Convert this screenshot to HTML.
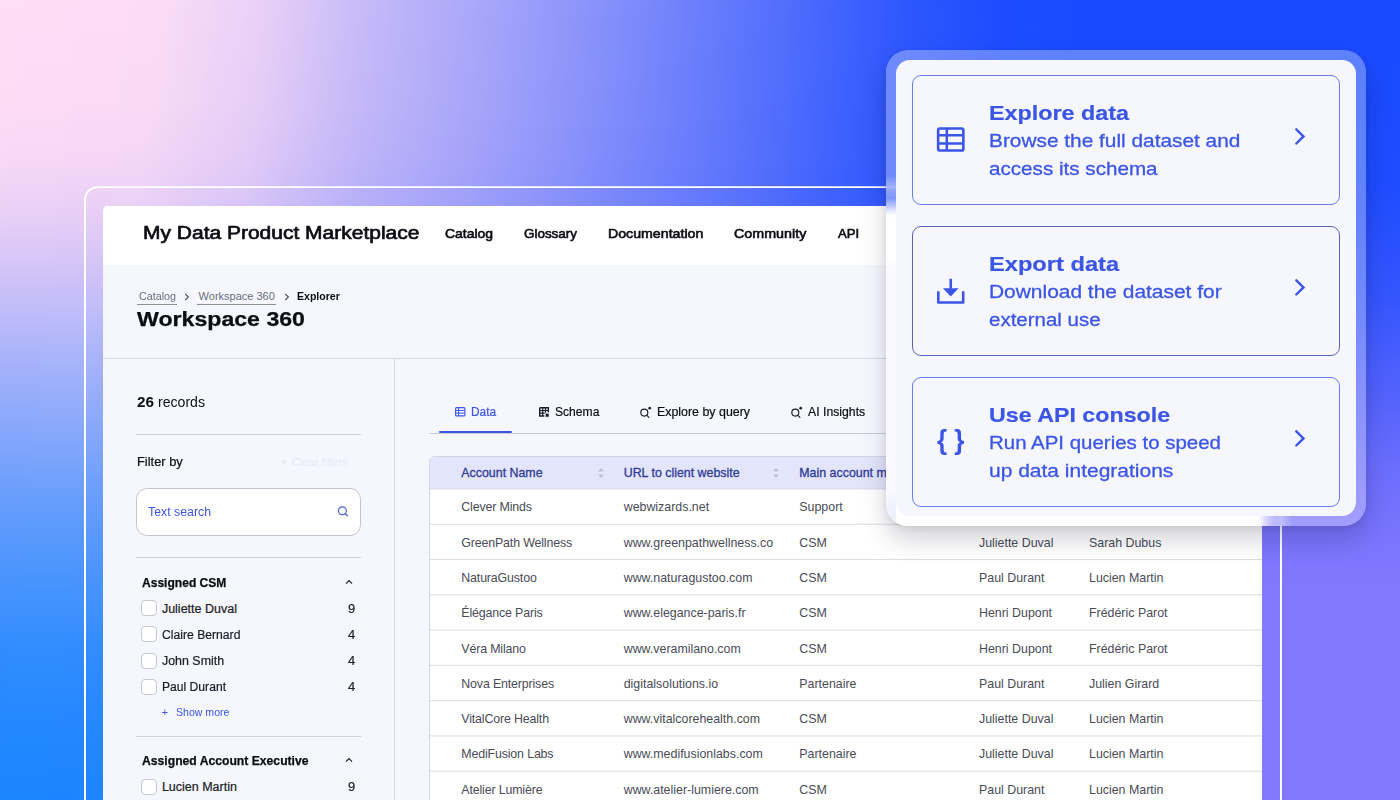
<!DOCTYPE html>
<html lang="en">
<head>
<meta charset="utf-8">
<title>My Data Product Marketplace</title>
<style>
*{box-sizing:border-box;margin:0;padding:0}
html,body{width:1400px;height:800px;overflow:hidden}
body{position:relative;font-family:"Liberation Sans",sans-serif;color:#0c0c14;background:#1d4bff}
.t{position:absolute;white-space:pre;line-height:1;display:block;transform-origin:0 50%}
.a{position:absolute}
/* ---------- background ---------- */
.bg-base{position:absolute;inset:0;background:linear-gradient(to bottom,#194aff 0%,#1e4cff 23%,#3355fe 36.5%,#5162fd 48.5%,#6b6dfd 58.5%,#7b75fd 67.5%,#8179fd 74.5%,#8179fd 100%)}
.bg-left{position:absolute;inset:0;
  background:linear-gradient(to bottom,#fedef6 0%,#fcdcf5 13%,#f7d8f6 20%,#eed3f6 25%,#d2c4f8 34.4%,#adb5fa 43.75%,#8aa9fb 53.1%,#679efc 62.5%,#4a95fd 71.9%,#308dfe 81.25%,#2288ff 90.6%,#1a85ff 100%);
  -webkit-mask-image:linear-gradient(96deg,#000 0%,rgba(0,0,0,.99) 10.7%,rgba(0,0,0,.9) 17.9%,rgba(0,0,0,.75) 25%,rgba(0,0,0,.63) 32.1%,rgba(0,0,0,.5) 39.3%,rgba(0,0,0,.37) 46.4%,rgba(0,0,0,.23) 53.6%,rgba(0,0,0,.095) 60.7%,rgba(0,0,0,.015) 67.9%,transparent 75%);
  mask-image:linear-gradient(96deg,#000 0%,rgba(0,0,0,.99) 10.7%,rgba(0,0,0,.9) 17.9%,rgba(0,0,0,.75) 25%,rgba(0,0,0,.63) 32.1%,rgba(0,0,0,.5) 39.3%,rgba(0,0,0,.37) 46.4%,rgba(0,0,0,.23) 53.6%,rgba(0,0,0,.095) 60.7%,rgba(0,0,0,.015) 67.9%,transparent 75%)}
/* ---------- frame ---------- */
.frame{position:absolute;left:83.5px;top:186.2px;width:1198.5px;height:700px;border:2px solid #fff;border-radius:14px;clip-path:polygon(0 0,802.5px 0,802.5px 339.8px,1300px 339.8px,1300px 800px,0 800px)}
/* ---------- app window ---------- */
.app{position:absolute;left:0;top:0;width:1400px;height:800px;clip-path:inset(206px 138px 0 103px round 5px 0 0 0);background:#f6f7fe}
.hdr{left:103px;top:206px;width:1159px;height:59.3px;background:#fff}
.hl{position:absolute;height:1px;background:#d6d8e2}
.vl{position:absolute;width:1px;background:#d6d8e2}
.ul{position:absolute;height:1px;background:#8b8e9b}
.search{left:136px;top:488px;width:225px;height:47.5px;border:1px solid #c3c5d0;border-radius:11px;background:#fff}
.cb{position:absolute;left:141.2px;width:16px;height:16px;border:1px solid #c6c8d3;border-radius:4px;background:#fff}
/* table */
.tbl{left:428.5px;top:456px;width:900px;height:400px;border:1px solid #d3d5e0;border-radius:6px 0 0 0;background:#fff;overflow:hidden}
.th{position:absolute;left:0;top:0;width:100%;height:31.6px;background:#e2e5fb}
.rl{position:absolute;left:0;width:100%;height:1px;background:#dcdde5}
.tabline{left:428.5px;top:432.6px;width:900px;height:1px;background:#c9cbd6}
.tabact{left:439.3px;top:431.3px;width:72.5px;height:2.2px;background:#3b55e6;border-radius:1px}
/* ---------- floating card ---------- */
.glass{left:886px;top:50px;width:479.5px;height:476px;border-radius:22px;background:rgba(255,255,255,.3);overflow:hidden;box-shadow:0 13px 26px rgba(12,12,35,.19),0 2px 6px rgba(12,12,35,.07)}
.p0{left:0;top:125px;width:10px;height:24px;background:linear-gradient(to bottom,rgba(255,255,255,0),rgba(255,255,255,.16) 25%,rgba(255,255,255,.36) 50%,rgba(255,255,255,.16) 75%,rgba(255,255,255,0))}
.p1{left:0;top:142px;width:10px;height:334px;background:linear-gradient(to bottom,#708cfe 0,#7c95fe 6px,#bac7fe 14px,#f4f6ff 21px,#fff 25px,#fff 64px,#f9f9ff 80px,#f9f9ff 300px,#eff1fd 316px,#eef0fd 336px,#fcfcff 352px,#fff 360px,#fff 100%)}
.p2{left:10px;top:466px;width:382px;height:10px;background:linear-gradient(to right,#fff 0,#fff 362px,#d4d1fe 371px,#a39efe 382px)}
.p3{left:383px;top:466px;width:24px;height:10px;background:linear-gradient(to right,rgba(255,255,255,0),rgba(255,255,255,.16) 25%,rgba(255,255,255,.36) 50%,rgba(255,255,255,.16) 75%,rgba(255,255,255,0))}
.panel{left:896px;top:60px;width:459.5px;height:456px;border-radius:14px;background:#f6f7fe}
.card{position:absolute;left:912px;width:428px;height:130px;border:1.5px solid #6a7eea;border-radius:9px;background:#f5f6fe}
svg{position:absolute;overflow:visible}
</style>
</head>
<body>
<div class="bg-base"></div>
<div class="bg-left"></div>
<div class="frame"></div>

<div class="app">
  <div class="a hdr"></div>
  <div class="hl" style="left:103px;top:358px;width:1159px"></div>
  <div class="vl" style="left:394px;top:358px;height:442px"></div>
  <!-- breadcrumb underlines + chevrons -->
  <div class="ul" style="left:137.2px;top:303.6px;width:39.6px"></div>
  <div class="ul" style="left:197px;top:303.6px;width:78.5px"></div>
  <svg style="left:184px;top:292.5px" width="6" height="8" viewBox="0 0 6 8"><path d="M1.2 1l3.2 3-3.2 3" fill="none" stroke="#4f5260" stroke-width="1.1"/></svg>
  <svg style="left:283.5px;top:292.5px" width="6" height="8" viewBox="0 0 6 8"><path d="M1.2 1l3.2 3-3.2 3" fill="none" stroke="#4f5260" stroke-width="1.1"/></svg>
  <!-- sidebar -->
  <div class="hl" style="left:136px;top:434px;width:225px;background:#cfd1db"></div>
  <div class="a search"></div>
  <svg style="left:336px;top:505px" width="13" height="13" viewBox="0 0 13 13"><circle cx="6.4" cy="5.75" r="3.9" fill="none" stroke="#4a5fdc" stroke-width="1.15"/><path d="M9.3 8.7l2.2 2.1" stroke="#4a5fdc" stroke-width="1.2" stroke-linecap="round"/></svg>
  <div class="hl" style="left:136px;top:556.5px;width:225px;background:#cfd1db"></div>
  <svg style="left:345px;top:578.5px" width="8" height="6" viewBox="0 0 8 6"><path d="M1 4.6l3-3 3 3" fill="none" stroke="#1c1d26" stroke-width="1.2"/></svg>
  <div class="cb" style="top:600.1px"></div>
  <div class="cb" style="top:626.4px"></div>
  <div class="cb" style="top:652.7px"></div>
  <div class="cb" style="top:678.9px"></div>
  <div class="hl" style="left:136px;top:736.2px;width:225px;background:#cfd1db"></div>
  <svg style="left:345px;top:757px" width="8" height="6" viewBox="0 0 8 6"><path d="M1 4.6l3-3 3 3" fill="none" stroke="#1c1d26" stroke-width="1.2"/></svg>
  <div class="cb" style="top:778.6px"></div>
  <!-- tabs -->
  <div class="a tabline"></div>
  <div class="a tabact"></div>
<svg style="left:454.6px;top:406.8px" width="11" height="10" viewBox="0 0 11 10"><rect x=".6" y=".6" width="9.3" height="8.3" rx="1" fill="none" stroke="#3b55e6" stroke-width="1.1"/><path d="M.6 3.4h9.3M.6 6.1h9.3M3.6 .6v8.3" stroke="#3b55e6" stroke-width="1" fill="none"/></svg>
<svg style="left:538.7px;top:406.8px" width="11" height="10" viewBox="0 0 11 10"><path d="M.7 .7h8.6v4.6M.7 .7v8.3h4.6" fill="none" stroke="#1c1d26" stroke-width="1.4"/><path d="M.7 3.5h8.6M.7 6.2h5M3.7 .7v8.3M6.5 .7v5" stroke="#1c1d26" stroke-width="1.2" fill="none"/><rect x="6.6" y="6.6" width="3.2" height="3.2" fill="#1c1d26"/></svg>
<svg style="left:639.9px;top:406.2px" width="13" height="12" viewBox="0 0 13 12"><circle cx="4.3" cy="6.6" r="3.5" fill="none" stroke="#1c1d26" stroke-width="1.15"/><path d="M6.9 9.3l2 2.1" stroke="#1c1d26" stroke-width="1.15" stroke-linecap="round"/><circle cx="9.7" cy="2.2" r="1.35" fill="#1c1d26"/></svg>
<svg style="left:790.9px;top:406.2px" width="13" height="12" viewBox="0 0 13 12"><circle cx="4.3" cy="6.6" r="3.5" fill="none" stroke="#1c1d26" stroke-width="1.15"/><path d="M6.9 9.3l2 2.1" stroke="#1c1d26" stroke-width="1.15" stroke-linecap="round"/><circle cx="9.7" cy="2.2" r="1.35" fill="#1c1d26"/></svg>
<span class="t" style="left:143.0px;top:223.90px;font-size:18px;color:#0c0c14;transform:scaleX(1.1658);-webkit-text-stroke:.65px currentColor;">My Data Product Marketplace</span>
<span class="t" style="left:444.7px;top:227.30px;font-size:13px;color:#0c0c14;transform:scaleX(1.0711);-webkit-text-stroke:.6px currentColor;">Catalog</span>
<span class="t" style="left:524.0px;top:227.30px;font-size:13px;color:#0c0c14;transform:scaleX(1.0332);-webkit-text-stroke:.6px currentColor;">Glossary</span>
<span class="t" style="left:608.2px;top:227.30px;font-size:13px;color:#0c0c14;transform:scaleX(1.0897);-webkit-text-stroke:.6px currentColor;">Documentation</span>
<span class="t" style="left:734.4px;top:227.30px;font-size:13px;color:#0c0c14;transform:scaleX(1.0996);-webkit-text-stroke:.6px currentColor;">Community</span>
<span class="t" style="left:837.6px;top:227.30px;font-size:13px;color:#0c0c14;transform:scaleX(1.0110);-webkit-text-stroke:.6px currentColor;">API</span>
<span class="t" style="left:138.6px;top:291.00px;font-size:11px;color:#6a6d7c;transform:scaleX(0.9783);">Catalog</span>
<span class="t" style="left:198.6px;top:291.00px;font-size:11px;color:#6a6d7c;">Workspace 360</span>
<span class="t" style="left:296.6px;top:291.00px;font-size:11px;color:#0c0c14;font-weight:700;transform:scaleX(0.9588);">Explorer</span>
<span class="t" style="left:137.1px;top:310.20px;font-size:19.5px;color:#0c0c14;font-weight:700;transform:scaleX(1.1860);-webkit-text-stroke:.25px currentColor;">Workspace 360</span>
<span class="t" style="left:136.8px;top:395.00px;font-size:14px;color:#0c0c14;font-weight:700;transform:scaleX(1.0913);">26</span>
<span class="t" style="left:158.0px;top:395.00px;font-size:14px;color:#0c0c14;transform:scaleX(1.0067);">records</span>
<span class="t" style="left:136.8px;top:455.50px;font-size:12px;color:#0c0c14;transform:scaleX(1.0717);-webkit-text-stroke:.2px currentColor;">Filter by</span>
<span class="t" style="left:292.0px;top:456.50px;font-size:11px;color:#e5e6f1;transform:scaleX(1.0067);">Clear filters</span>
<span class="t" style="left:280.5px;top:456.50px;font-size:11px;color:#e5e6f1;">×</span>
<span class="t" style="left:148.2px;top:505.75px;font-size:12px;color:#3b55e6;transform:scaleX(1.0267);">Text search</span>
<span class="t" style="left:142.2px;top:576.90px;font-size:12px;color:#0c0c14;font-weight:700;transform:scaleX(1.0046);-webkit-text-stroke:.25px currentColor;">Assigned CSM</span>
<span class="t" style="left:161.9px;top:602.60px;font-size:12.5px;color:#1c1d26;-webkit-text-stroke:.22px currentColor;">Juliette Duval</span>
<span class="t" style="left:347.5px;top:602.60px;font-size:12.5px;color:#1c1d26;transform:scaleX(1.0355);-webkit-text-stroke:.22px currentColor;">9</span>
<span class="t" style="left:161.9px;top:629.00px;font-size:12.5px;color:#1c1d26;transform:scaleX(0.9728);-webkit-text-stroke:.22px currentColor;">Claire Bernard</span>
<span class="t" style="left:347.5px;top:629.00px;font-size:12.5px;color:#1c1d26;transform:scaleX(1.0355);-webkit-text-stroke:.22px currentColor;">4</span>
<span class="t" style="left:161.9px;top:655.30px;font-size:12.5px;color:#1c1d26;transform:scaleX(0.9931);-webkit-text-stroke:.22px currentColor;">John Smith</span>
<span class="t" style="left:347.5px;top:655.30px;font-size:12.5px;color:#1c1d26;transform:scaleX(1.0355);-webkit-text-stroke:.22px currentColor;">4</span>
<span class="t" style="left:161.9px;top:681.40px;font-size:12.5px;color:#1c1d26;transform:scaleX(0.9695);-webkit-text-stroke:.22px currentColor;">Paul Durant</span>
<span class="t" style="left:347.5px;top:681.40px;font-size:12.5px;color:#1c1d26;transform:scaleX(1.0355);-webkit-text-stroke:.22px currentColor;">4</span>
<span class="t" style="left:161.5px;top:707.30px;font-size:11px;color:#3b55e6;">+</span>
<span class="t" style="left:175.6px;top:707.30px;font-size:11px;color:#3b55e6;transform:scaleX(0.9597);">Show more</span>
<span class="t" style="left:142.2px;top:755.00px;font-size:12px;color:#0c0c14;font-weight:700;transform:scaleX(1.0138);-webkit-text-stroke:.25px currentColor;">Assigned Account Executive</span>
<span class="t" style="left:161.9px;top:781.10px;font-size:12.5px;color:#1c1d26;-webkit-text-stroke:.22px currentColor;">Lucien Martin</span>
<span class="t" style="left:347.5px;top:781.10px;font-size:12.5px;color:#1c1d26;transform:scaleX(1.0355);-webkit-text-stroke:.22px currentColor;">9</span>
<span class="t" style="left:471.4px;top:406.30px;font-size:12.5px;color:#3b55e6;transform:scaleX(0.9467);-webkit-text-stroke:.2px currentColor;">Data</span>
<span class="t" style="left:554.6px;top:406.30px;font-size:12.5px;color:#0c0c14;transform:scaleX(0.9682);-webkit-text-stroke:.2px currentColor;">Schema</span>
<span class="t" style="left:657.0px;top:406.30px;font-size:12.5px;color:#0c0c14;transform:scaleX(0.9913);-webkit-text-stroke:.2px currentColor;">Explore by query</span>
<span class="t" style="left:808.2px;top:406.30px;font-size:12.5px;color:#0c0c14;transform:scaleX(0.9799);-webkit-text-stroke:.2px currentColor;">AI Insights</span>
  <!-- table -->
  <div class="a tbl">
    <div class="th"></div>
<svg style="left:0;top:0" width="900" height="400" viewBox="0 0 900 400"><path d="M0 32.00h900M0 67.28h900M0 102.56h900M0 137.84h900M0 173.12h900M0 208.40h900M0 243.68h900M0 278.96h900M0 314.24h900M0 349.52h900M0 384.80h900" stroke="#dadbe4" stroke-width="1" fill="none"/></svg>
  </div>
<svg style="left:597.2px;top:465.5px" width="8" height="14" viewBox="0 0 8 14"><path d="M1.2 5.2L4 2.2l2.8 3z" fill="#b9bbc9"/><path d="M1.2 8.8L4 11.8l2.8-3z" fill="#b9bbc9"/></svg>
<svg style="left:772.2px;top:465.5px" width="8" height="14" viewBox="0 0 8 14"><path d="M1.2 5.2L4 2.2l2.8 3z" fill="#b9bbc9"/><path d="M1.2 8.8L4 11.8l2.8-3z" fill="#b9bbc9"/></svg>
<span class="t" style="left:461.3px;top:466.70px;font-size:12.4px;color:#303a97;-webkit-text-stroke:.3px currentColor;">Account Name</span>
<span class="t" style="left:623.7px;top:466.70px;font-size:12.4px;color:#303a97;-webkit-text-stroke:.3px currentColor;">URL to client website</span>
<span class="t" style="left:799.3px;top:466.70px;font-size:12.4px;color:#303a97;-webkit-text-stroke:.3px currentColor;">Main account manager</span>
<span class="t" style="left:979.0px;top:466.70px;font-size:12.4px;color:#303a97;-webkit-text-stroke:.3px currentColor;">Assigned CSM</span>
<span class="t" style="left:1089.0px;top:466.70px;font-size:12.4px;color:#303a97;-webkit-text-stroke:.3px currentColor;">Assigned Account Executive</span>
<span class="t" style="left:461.3px;top:501.40px;font-size:12.4px;color:#4a4b57;letter-spacing:-.15px;">Clever Minds</span>
<span class="t" style="left:623.7px;top:501.40px;font-size:12.4px;color:#4a4b57;">webwizards.net</span>
<span class="t" style="left:799.3px;top:501.40px;font-size:12.4px;color:#4a4b57;">Support</span>
<span class="t" style="left:979.0px;top:501.40px;font-size:12.4px;color:#4a4b57;">Juliette Duval</span>
<span class="t" style="left:1089.0px;top:501.40px;font-size:12.4px;color:#4a4b57;">Lucien Martin</span>
<span class="t" style="left:461.3px;top:536.68px;font-size:12.4px;color:#4a4b57;letter-spacing:-.15px;">GreenPath Wellness</span>
<span class="t" style="left:623.7px;top:536.68px;font-size:12.4px;color:#4a4b57;">www.greenpathwellness.co</span>
<span class="t" style="left:799.3px;top:536.68px;font-size:12.4px;color:#4a4b57;">CSM</span>
<span class="t" style="left:979.0px;top:536.68px;font-size:12.4px;color:#4a4b57;">Juliette Duval</span>
<span class="t" style="left:1089.0px;top:536.68px;font-size:12.4px;color:#4a4b57;">Sarah Dubus</span>
<span class="t" style="left:461.3px;top:571.96px;font-size:12.4px;color:#4a4b57;letter-spacing:-.15px;">NaturaGustoo</span>
<span class="t" style="left:623.7px;top:571.96px;font-size:12.4px;color:#4a4b57;">www.naturagustoo.com</span>
<span class="t" style="left:799.3px;top:571.96px;font-size:12.4px;color:#4a4b57;">CSM</span>
<span class="t" style="left:979.0px;top:571.96px;font-size:12.4px;color:#4a4b57;">Paul Durant</span>
<span class="t" style="left:1089.0px;top:571.96px;font-size:12.4px;color:#4a4b57;">Lucien Martin</span>
<span class="t" style="left:461.3px;top:607.24px;font-size:12.4px;color:#4a4b57;letter-spacing:-.15px;">Élégance Paris</span>
<span class="t" style="left:623.7px;top:607.24px;font-size:12.4px;color:#4a4b57;">www.elegance-paris.fr</span>
<span class="t" style="left:799.3px;top:607.24px;font-size:12.4px;color:#4a4b57;">CSM</span>
<span class="t" style="left:979.0px;top:607.24px;font-size:12.4px;color:#4a4b57;">Henri Dupont</span>
<span class="t" style="left:1089.0px;top:607.24px;font-size:12.4px;color:#4a4b57;">Frédéric Parot</span>
<span class="t" style="left:461.3px;top:642.52px;font-size:12.4px;color:#4a4b57;letter-spacing:-.15px;">Véra Milano</span>
<span class="t" style="left:623.7px;top:642.52px;font-size:12.4px;color:#4a4b57;">www.veramilano.com</span>
<span class="t" style="left:799.3px;top:642.52px;font-size:12.4px;color:#4a4b57;">CSM</span>
<span class="t" style="left:979.0px;top:642.52px;font-size:12.4px;color:#4a4b57;">Henri Dupont</span>
<span class="t" style="left:1089.0px;top:642.52px;font-size:12.4px;color:#4a4b57;">Frédéric Parot</span>
<span class="t" style="left:461.3px;top:677.80px;font-size:12.4px;color:#4a4b57;letter-spacing:-.15px;">Nova Enterprises</span>
<span class="t" style="left:623.7px;top:677.80px;font-size:12.4px;color:#4a4b57;">digitalsolutions.io</span>
<span class="t" style="left:799.3px;top:677.80px;font-size:12.4px;color:#4a4b57;">Partenaire</span>
<span class="t" style="left:979.0px;top:677.80px;font-size:12.4px;color:#4a4b57;">Paul Durant</span>
<span class="t" style="left:1089.0px;top:677.80px;font-size:12.4px;color:#4a4b57;">Julien Girard</span>
<span class="t" style="left:461.3px;top:713.08px;font-size:12.4px;color:#4a4b57;letter-spacing:-.15px;">VitalCore Health</span>
<span class="t" style="left:623.7px;top:713.08px;font-size:12.4px;color:#4a4b57;">www.vitalcorehealth.com</span>
<span class="t" style="left:799.3px;top:713.08px;font-size:12.4px;color:#4a4b57;">CSM</span>
<span class="t" style="left:979.0px;top:713.08px;font-size:12.4px;color:#4a4b57;">Juliette Duval</span>
<span class="t" style="left:1089.0px;top:713.08px;font-size:12.4px;color:#4a4b57;">Lucien Martin</span>
<span class="t" style="left:461.3px;top:748.36px;font-size:12.4px;color:#4a4b57;letter-spacing:-.15px;">MediFusion Labs</span>
<span class="t" style="left:623.7px;top:748.36px;font-size:12.4px;color:#4a4b57;">www.medifusionlabs.com</span>
<span class="t" style="left:799.3px;top:748.36px;font-size:12.4px;color:#4a4b57;">Partenaire</span>
<span class="t" style="left:979.0px;top:748.36px;font-size:12.4px;color:#4a4b57;">Juliette Duval</span>
<span class="t" style="left:1089.0px;top:748.36px;font-size:12.4px;color:#4a4b57;">Lucien Martin</span>
<span class="t" style="left:461.3px;top:783.64px;font-size:12.4px;color:#4a4b57;letter-spacing:-.15px;">Atelier Lumière</span>
<span class="t" style="left:623.7px;top:783.64px;font-size:12.4px;color:#4a4b57;">www.atelier-lumiere.com</span>
<span class="t" style="left:799.3px;top:783.64px;font-size:12.4px;color:#4a4b57;">CSM</span>
<span class="t" style="left:979.0px;top:783.64px;font-size:12.4px;color:#4a4b57;">Paul Durant</span>
<span class="t" style="left:1089.0px;top:783.64px;font-size:12.4px;color:#4a4b57;">Lucien Martin</span>
</div>

<!-- floating card -->
<div class="a glass"><div class="a p1"></div><div class="a p0"></div><div class="a p2"></div><div class="a p3"></div></div>
<div class="a panel"></div>
<div class="card" style="top:75px"></div>
<div class="card" style="top:226px;border-color:#5a63b4"></div>
<div class="card" style="top:377px"></div>
<svg style="left:936px;top:126px" width="30" height="27" viewBox="0 0 30 27"><rect x="2.15" y="2.45" width="25.2" height="22.1" rx="1.6" fill="none" stroke="#3b55e6" stroke-width="2.6"/><path d="M2 9.3h25.5M2 17.5h25.5M10.8 2.4v22.2" stroke="#3b55e6" stroke-width="2.5" fill="none"/></svg>
<svg style="left:936px;top:277px" width="30" height="28" viewBox="0 0 30 28"><path d="M2.3 14.2v11.3h24.9V14.2" fill="none" stroke="#3b55e6" stroke-width="2.6" stroke-linejoin="round"/><path d="M14.75 1.8v10" stroke="#3b55e6" stroke-width="2.6" fill="none"/><path d="M6.9 11.2h15.7l-7.85 8.3z" fill="#3b55e6"/></svg>
<svg style="left:1294px;top:127px" width="12" height="19" viewBox="0 0 12 19"><path d="M2.3 2.3l7.2 7.1-7.2 7.1" fill="none" stroke="#3b55e6" stroke-width="2.4" stroke-linecap="round" stroke-linejoin="miter"/></svg>
<svg style="left:1294px;top:278px" width="12" height="19" viewBox="0 0 12 19"><path d="M2.3 2.3l7.2 7.1-7.2 7.1" fill="none" stroke="#3b55e6" stroke-width="2.4" stroke-linecap="round" stroke-linejoin="miter"/></svg>
<svg style="left:1294px;top:429px" width="12" height="19" viewBox="0 0 12 19"><path d="M2.3 2.3l7.2 7.1-7.2 7.1" fill="none" stroke="#3b55e6" stroke-width="2.4" stroke-linecap="round" stroke-linejoin="miter"/></svg>
<span class="t" style="left:989.4px;top:103.20px;font-size:20.6px;color:#3b55e6;font-weight:700;transform:scaleX(1.1326);-webkit-text-stroke:.2px currentColor;">Explore data</span>
<span class="t" style="left:989.4px;top:131.20px;font-size:19px;color:#3b55e6;transform:scaleX(1.0968);-webkit-text-stroke:.3px currentColor;">Browse the full dataset and</span>
<span class="t" style="left:989.4px;top:158.60px;font-size:19px;color:#3b55e6;transform:scaleX(1.0861);-webkit-text-stroke:.3px currentColor;">access its schema</span>
<span class="t" style="left:989.4px;top:254.20px;font-size:20.6px;color:#3b55e6;font-weight:700;transform:scaleX(1.1483);-webkit-text-stroke:.2px currentColor;">Export data</span>
<span class="t" style="left:989.4px;top:282.20px;font-size:19px;color:#3b55e6;transform:scaleX(1.1011);-webkit-text-stroke:.3px currentColor;">Download the dataset for</span>
<span class="t" style="left:989.4px;top:309.60px;font-size:19px;color:#3b55e6;transform:scaleX(1.0781);-webkit-text-stroke:.3px currentColor;">external use</span>
<span class="t" style="left:989.4px;top:405.20px;font-size:20.6px;color:#3b55e6;font-weight:700;transform:scaleX(1.1276);-webkit-text-stroke:.2px currentColor;">Use API console</span>
<span class="t" style="left:989.4px;top:433.20px;font-size:19px;color:#3b55e6;transform:scaleX(1.0766);-webkit-text-stroke:.3px currentColor;">Run API queries to speed</span>
<span class="t" style="left:989.4px;top:460.60px;font-size:19px;color:#3b55e6;transform:scaleX(1.1042);-webkit-text-stroke:.3px currentColor;">up data integrations</span>
<span class="t" style="left:937.0px;top:427.30px;font-size:27px;color:#3b55e6;font-weight:700;transform:scaleX(0.9639);">{ }</span>
</body>
</html>
